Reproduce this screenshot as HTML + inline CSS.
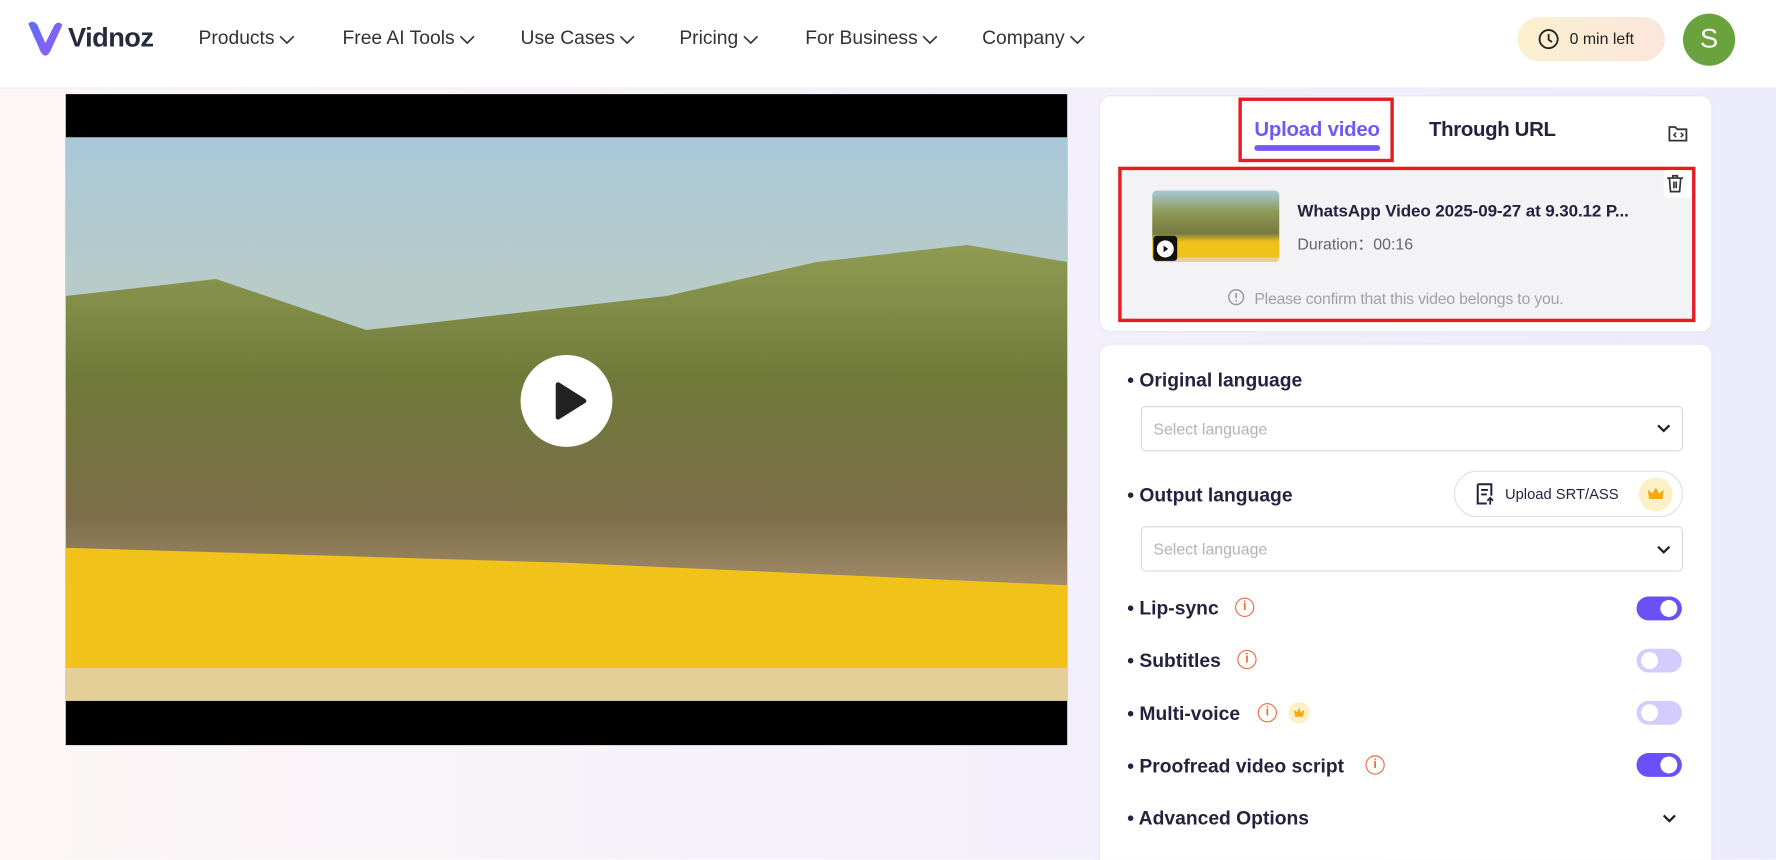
<!DOCTYPE html>
<html><head><meta charset="utf-8"><style>
*{box-sizing:border-box;margin:0;padding:0}
html,body{width:1776px;height:860px;overflow:hidden;background:#fff;font-family:"Liberation Sans",sans-serif}
#w{position:absolute;left:0;top:0;width:1566px;height:758px;overflow:hidden;transform:scale(1.1341);transform-origin:0 0;background:linear-gradient(90deg,#fcf6f6,#f3f0fb 60%,#ecebfc)}
.a{position:absolute}
.hdr{left:0;top:0;width:1566px;height:78px;background:#fff;border-bottom:1px solid #eee}
.nav{top:24px;font-size:17px;color:#333}
.nav svg{vertical-align:middle;margin-left:4px}
.card{background:#fff;border-radius:10px;border:1px solid #e8e6f2}
.lbl{font-size:17px;font-weight:bold;color:#23233f}
.sel{left:1006px;width:478px;height:40px;border:1px solid #d8d8de;border-radius:4px;background:#fff;font-size:14px;color:#b2b2b8;padding:11px 10px}
.tg{left:1443px;width:40px;height:21px;border-radius:11px;background:#6a50f6}
.tg::after{content:"";position:absolute;right:4px;top:3px;width:15px;height:15px;border-radius:50%;background:#fff}
.tg.off{background:#d4ccfc}.tg.off::after{right:auto;left:4px}
.inf{width:17px;height:17px;border:1.5px solid #f06a3a;border-radius:50%;color:#f06a3a;font-size:11px;text-align:center;line-height:14px;font-weight:bold}
</style></head><body><div id="w">
<div class="a hdr"></div>
<svg class="a" style="left:22px;top:16px" width="36" height="36" viewBox="0 0 36 36"><defs><linearGradient id="g" x1="0" y1="0" x2="1" y2="1"><stop offset="0" stop-color="#5a6cf7"/><stop offset="1" stop-color="#9a5cf5"/></linearGradient></defs><path d="M3 5 L14 30 Q18 36 22 30 L33 6 Q30 2 26 6 L18 22 L11 6 Q7 1 3 5Z" fill="url(#g)"/></svg>
<div class="a" style="left:60px;top:20px;font-size:24px;font-weight:bold;color:#262a3e;letter-spacing:-0.5px">Vidnoz</div>
<div class="a nav" style="left:175px">Products<svg width="14" height="8"><path d="M1 1l6 6 6-6" stroke="#333" fill="none" stroke-width="1.5"/></svg></div>
<div class="a nav" style="left:302px">Free AI Tools<svg width="14" height="8"><path d="M1 1l6 6 6-6" stroke="#333" fill="none" stroke-width="1.5"/></svg></div>
<div class="a nav" style="left:459px">Use Cases<svg width="14" height="8"><path d="M1 1l6 6 6-6" stroke="#333" fill="none" stroke-width="1.5"/></svg></div>
<div class="a nav" style="left:599px">Pricing<svg width="14" height="8"><path d="M1 1l6 6 6-6" stroke="#333" fill="none" stroke-width="1.5"/></svg></div>
<div class="a nav" style="left:710px">For Business<svg width="14" height="8"><path d="M1 1l6 6 6-6" stroke="#333" fill="none" stroke-width="1.5"/></svg></div>
<div class="a nav" style="left:866px">Company<svg width="14" height="8"><path d="M1 1l6 6 6-6" stroke="#333" fill="none" stroke-width="1.5"/></svg></div>
<div class="a" style="left:1338px;top:15px;width:130px;height:39px;border-radius:20px;background:linear-gradient(90deg,#fbf0cf,#fbe6dc);font-size:14px;color:#222;padding:11px 0 0 46px">0 min left</div>
<svg class="a" style="left:1356px;top:25px" width="19" height="19"><circle cx="9.5" cy="9.5" r="8" fill="none" stroke="#222" stroke-width="1.6"/><path d="M9.5 5v5l3 2" stroke="#222" fill="none" stroke-width="1.6"/></svg>
<div class="a" style="left:1484px;top:12px;width:46px;height:46px;border-radius:50%;background:#6aa33d;color:#fff;font-size:24px;text-align:center;line-height:46px">S</div>

<div class="a" style="left:58px;top:83px;width:883px;height:574px;background:#000"></div>
<div class="a" style="left:58px;top:121px;width:883px;height:497px;overflow:hidden;background:linear-gradient(180deg,#a9c8d9 0%,#b7cbc9 25%)">
 <div class="a" style="left:0;top:95px;width:883px;height:300px;background:linear-gradient(180deg,#8f9b52,#6f7a3a 40%,#7d6e4a 80%,#a08a6a);clip-path:polygon(0 15%,15% 10%,30% 25%,45% 20%,60% 15%,75% 5%,90% 0,100% 5%,100% 100%,0 100%)"></div>
 <div class="a" style="left:0;top:362px;width:883px;height:110px;background:#f1c21a;clip-path:polygon(0 0,50% 12%,100% 30%,100% 100%,0 100%)"></div>
 <div class="a" style="left:0;top:468px;width:883px;height:29px;background:#e4cf98"></div>
</div>
<div class="a" style="left:459px;top:313px;width:81px;height:81px;border-radius:50%;background:#fff"></div>
<svg class="a" style="left:459px;top:313px" width="81" height="81"><path d="M33 26 L56 40.5 L33 55Z" fill="#222" stroke="#222" stroke-width="4" stroke-linejoin="round"/></svg>

<div class="a card" style="left:969px;top:84px;width:541px;height:209px"></div>
<div class="a" style="left:1092px;top:86px;width:137px;height:57px;border:3px solid #e51c23"></div>
<div class="a" style="left:1106px;top:104px;font-size:18px;font-weight:bold;color:#7457f5;letter-spacing:-0.2px">Upload video</div>
<div class="a" style="left:1106px;top:128px;width:111px;height:5px;border-radius:3px;background:#7457f5"></div>
<div class="a" style="left:1260px;top:104px;font-size:18px;font-weight:bold;color:#23233f;letter-spacing:-0.3px">Through URL</div>
<svg class="a" style="left:1470px;top:108px" width="20" height="19"><path d="M2 4h5l2 2h8v10H2z" fill="none" stroke="#333" stroke-width="1.6"/><path d="M8 9l-2 2 2 2M12 9l2 2-2 2" stroke="#333" fill="none" stroke-width="1.3"/></svg>
<div class="a" style="left:986px;top:147px;width:509px;height:137px;background:#f3f3f6;border:3px solid #e51c23"></div>
<div class="a" style="left:1467px;top:150px;width:24px;height:24px;background:#fff;border-radius:3px"></div>
<svg class="a" style="left:1468px;top:153px" width="18" height="18"><path d="M2 4h14M7 4V2h4v2M4 4l1 12h8l1-12M8 7v6M10 7v6" stroke="#333" fill="none" stroke-width="1.5"/></svg>
<div class="a" style="left:1016px;top:168px;width:112px;height:63px;border-radius:4px;overflow:hidden;background:linear-gradient(180deg,#a9c8d9 0%,#8d9a55 30%,#767a42 60%,#f1c21a 72%,#f1c21a 94%,#e4cf98 94%)"></div>
<div class="a" style="left:1017px;top:208px;width:21px;height:22px;background:#111;border-radius:3px"></div>
<svg class="a" style="left:1019px;top:211px" width="17" height="17"><circle cx="8.5" cy="8.5" r="7.5" fill="#fff"/><path d="M7 5.5l4 3-4 3z" fill="#111"/></svg>
<div class="a" style="left:1144px;top:178px;font-size:15px;font-weight:bold;color:#23233f;letter-spacing:-0.1px">WhatsApp Video 2025-09-27 at 9.30.12 P...</div>
<div class="a" style="left:1144px;top:205px;font-size:14px;color:#666">Duration：00:16</div>
<svg class="a" style="left:1082px;top:254px" width="16" height="16"><circle cx="8" cy="8" r="6.5" fill="none" stroke="#999" stroke-width="1.3"/><path d="M8 4.5v4.5M8 10.5v1.3" stroke="#999" stroke-width="1.5"/></svg>
<div class="a" style="left:1106px;top:255px;font-size:14px;color:#a0a0a8;letter-spacing:-0.2px">Please confirm that this video belongs to you.</div>

<div class="a card" style="left:969px;top:303px;width:541px;height:455px;border-bottom-left-radius:0;border-bottom-right-radius:0;border-bottom:none"></div>
<div class="a lbl" style="left:994px;top:326px">• Original language</div>
<div class="a sel" style="top:358px">Select language</div>
<svg class="a" style="left:1461px;top:374px" width="12" height="8"><path d="M1 1l5 5 5-5" stroke="#222" fill="none" stroke-width="2"/></svg>
<div class="a lbl" style="left:994px;top:427px">• Output language</div>
<div class="a" style="left:1282px;top:415px;width:202px;height:41px;border:1px solid #e0e0e6;border-radius:21px;background:#fff"></div>
<svg class="a" style="left:1301px;top:425px" width="18" height="21"><path d="M2 2h12v10M2 2v17h8" stroke="#23233f" fill="none" stroke-width="1.8"/><path d="M5 7h6M5 11h5M13 20v-6M10.5 16.5l2.5-2.5 2.5 2.5" stroke="#23233f" fill="none" stroke-width="1.6"/></svg>
<div class="a" style="left:1327px;top:428px;font-size:13px;color:#23233f">Upload SRT/ASS</div>
<div class="a" style="left:1445px;top:421px;width:30px;height:30px;border-radius:50%;background:#fbf1c6"></div>
<svg class="a" style="left:1452px;top:428px" width="16" height="14"><path d="M1 4l4 3 3-5 3 5 4-3-1 8H2z" fill="#f5a812"/></svg>
<div class="a sel" style="top:464px">Select language</div>
<svg class="a" style="left:1461px;top:481px" width="12" height="8"><path d="M1 1l5 5 5-5" stroke="#222" fill="none" stroke-width="2"/></svg>
<div class="a lbl" style="left:994px;top:527px">• Lip-sync</div>
<div class="a inf" style="left:1089px;top:527px">i</div>
<div class="a tg" style="top:526px"></div>
<div class="a lbl" style="left:994px;top:573px">• Subtitles</div>
<div class="a inf" style="left:1091px;top:573px">i</div>
<div class="a tg off" style="top:572px"></div>
<div class="a lbl" style="left:994px;top:620px">• Multi-voice</div>
<div class="a inf" style="left:1109px;top:620px">i</div>
<div class="a" style="left:1136px;top:619px;width:19px;height:19px;border-radius:50%;background:#fbf1c6"></div>
<svg class="a" style="left:1140px;top:623px" width="11" height="10"><path d="M1 3l3 2 1.5-4 1.5 4 3-2-1 6H2z" fill="#f5a812"/></svg>
<div class="a tg off" style="top:618px"></div>
<div class="a lbl" style="left:994px;top:666px">• Proofread video script</div>
<div class="a inf" style="left:1204px;top:666px">i</div>
<div class="a tg" style="top:664px"></div>
<div class="a lbl" style="left:994px;top:712px">• Advanced Options</div>
<svg class="a" style="left:1466px;top:718px" width="12" height="8"><path d="M1 1l5 5 5-5" stroke="#222" fill="none" stroke-width="2"/></svg>
</div></body></html>
